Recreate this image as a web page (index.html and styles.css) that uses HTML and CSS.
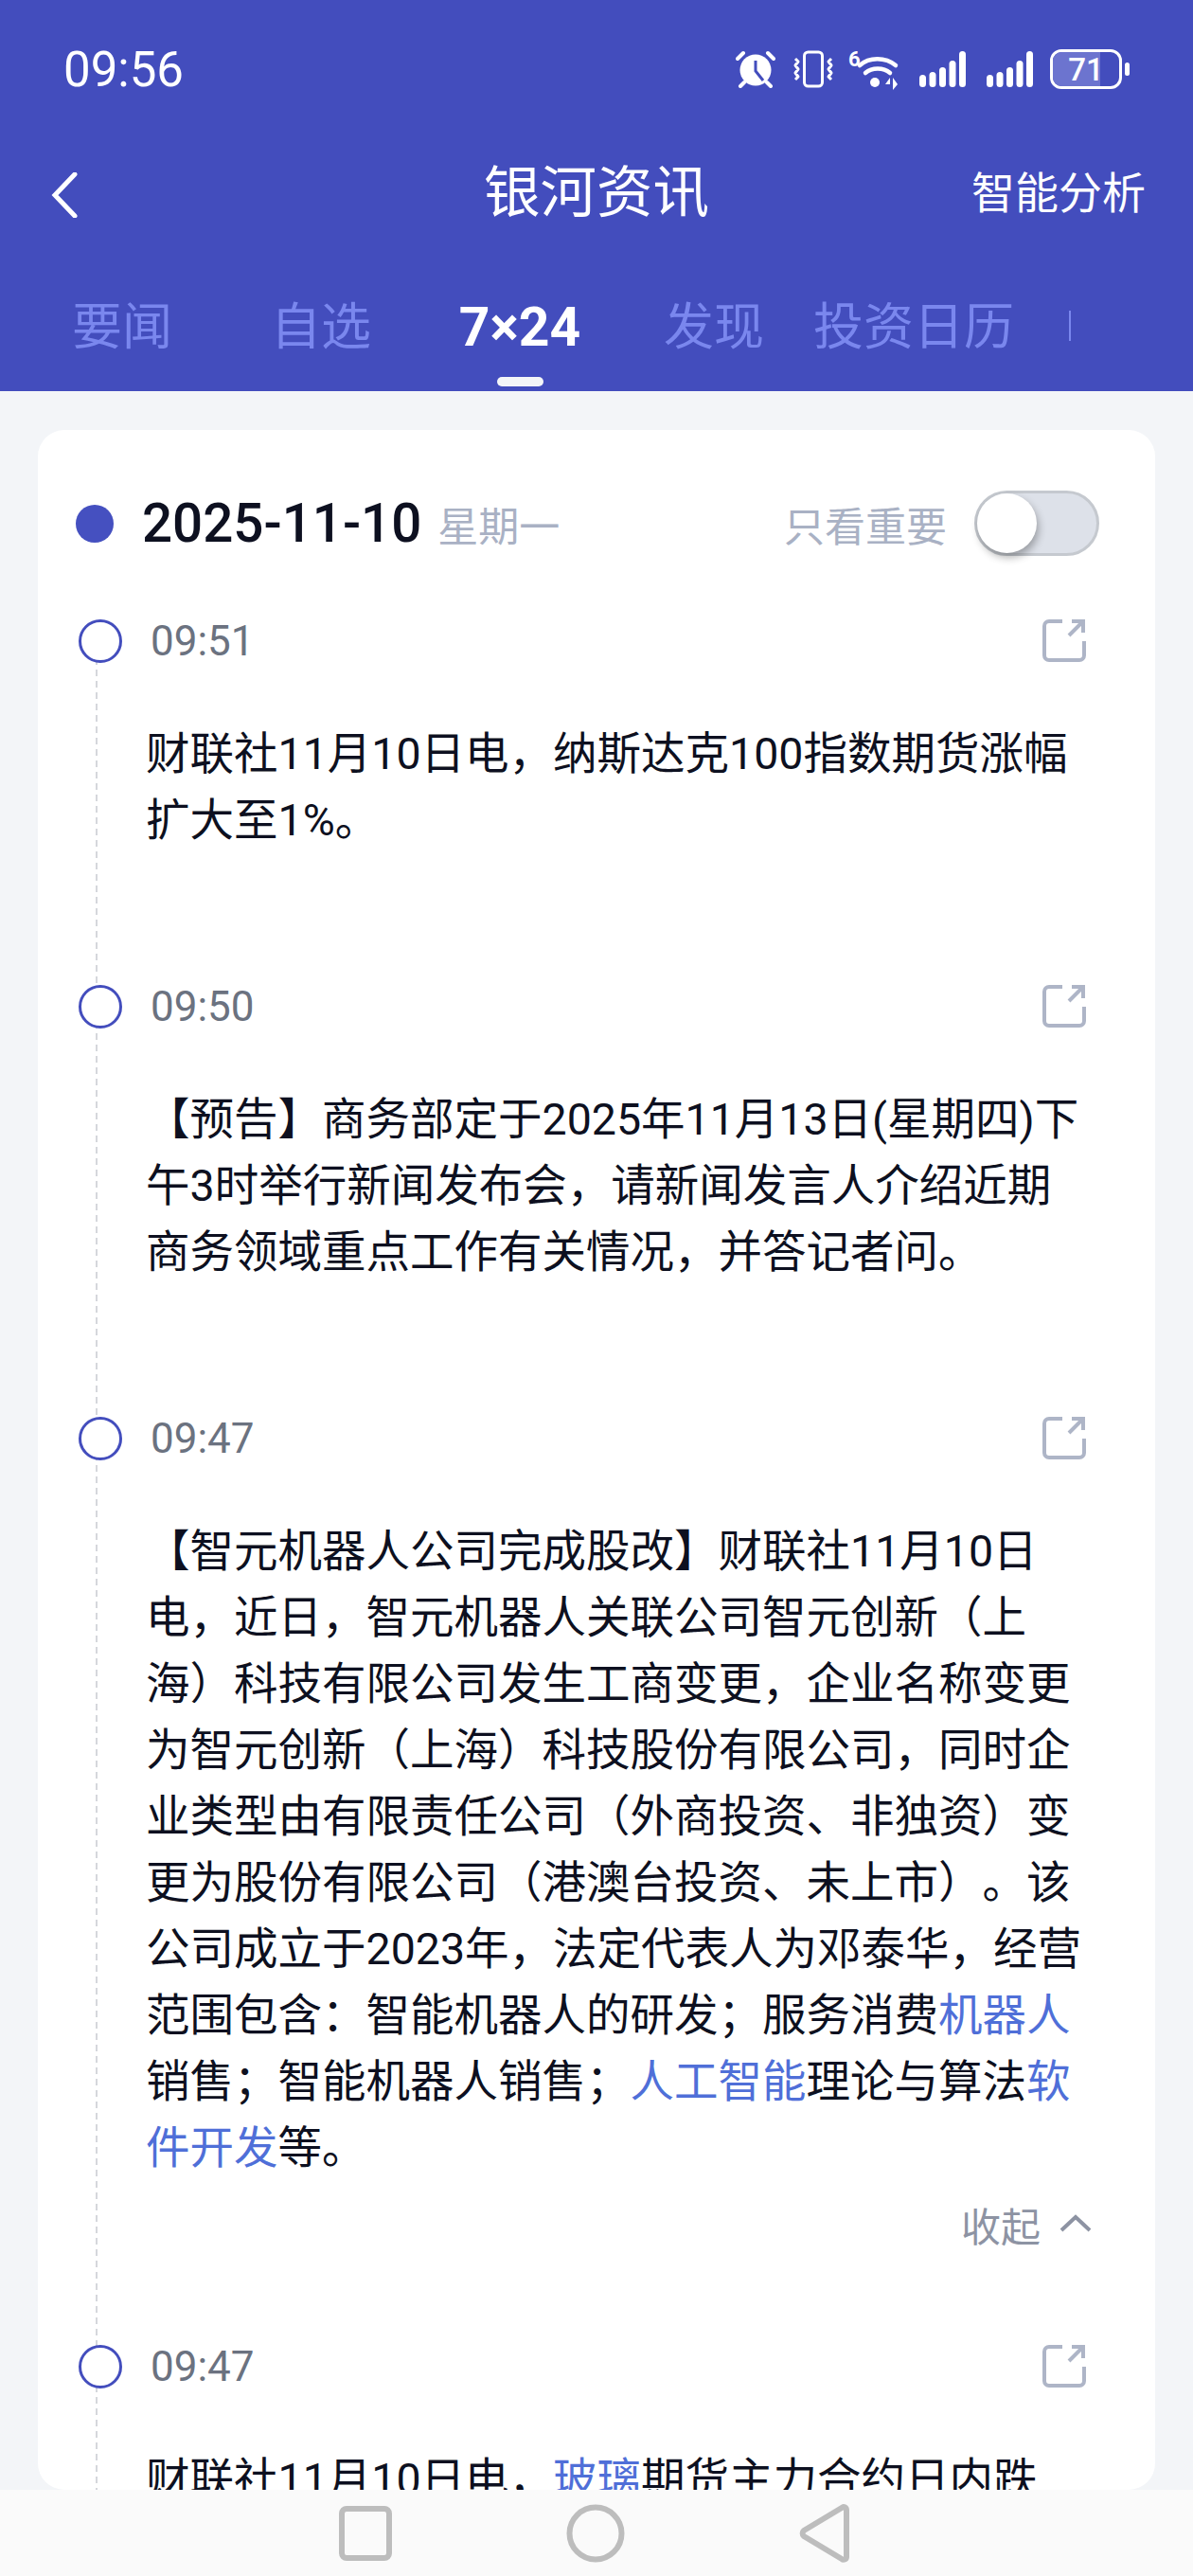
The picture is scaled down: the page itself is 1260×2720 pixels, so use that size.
FILE: index.html
```html
<!DOCTYPE html>
<html lang="zh-CN">
<head>
  <meta charset="UTF-8">
  <meta name="viewport" content="width=device-width, initial-scale=1.0">
  <title>银河资讯</title>
  <link rel="stylesheet" href="styles.css">
</head>
<body>
  <div class="page">
    <header class="header">
      <div class="status-bar">
        <span class="clock">09:56</span>
        <div class="status-icons">
          <svg class="icon-alarm" width="42" height="40" viewBox="0 0 42 40">
            <circle cx="21" cy="21" r="16.5" fill="#fff"/>
            <path d="M21 11v11l8 10" fill="none" stroke="#434dbd" stroke-width="3"/>
            <path d="M2 9l6-6M40 9l-6-6M5 38l4-4M37 38l-4-4" fill="none" stroke="#fff" stroke-width="4" stroke-linecap="round"/>
          </svg>
          <svg class="icon-vibrate" width="46" height="40" viewBox="0 0 46 40">
            <rect x="13.5" y="2" width="19" height="36" rx="4" fill="none" stroke="#fff" stroke-width="3"/>
            <path d="M4 9l3 3-3 4 3 4-3 4 3 4-3 3M42 9l-3 3 3 4-3 4 3 4-3 4 3 3" fill="none" stroke="#fff" stroke-width="3" stroke-linejoin="round"/>
          </svg>
          <svg class="icon-wifi" width="54" height="44" viewBox="0 0 54 44">
            <text x="0" y="19" class="wifi-six">6</text>
            <path d="M12 18c10-9 27-9 38 0M18 26c7-6 19-6 26 0" fill="none" stroke="#fff" stroke-width="4.5" stroke-linecap="round"/>
            <circle cx="28" cy="36" r="5" fill="#fff"/>
            <path d="M44 31l-5 7h5zM47 31v13l5-6z" fill="#fff"/>
          </svg>
          <svg class="icon-signal" width="50" height="40" viewBox="0 0 50 40">
            <rect x="0" y="26" width="7" height="13" rx="3.5" fill="#fff"/>
            <rect x="10.500" y="23" width="7" height="16" rx="3.5" fill="#fff"/>
            <rect x="21" y="18" width="7" height="21" rx="3.5" fill="#fff"/>
            <rect x="31.500" y="11" width="7" height="28" rx="3.5" fill="#fff"/>
            <rect x="42" y="1" width="7" height="38" rx="3.5" fill="#fff"/>
          </svg>
          <svg class="icon-signal" width="50" height="40" viewBox="0 0 50 40">
            <rect x="0" y="26" width="7" height="13" rx="3.5" fill="#fff"/>
            <rect x="10.500" y="23" width="7" height="16" rx="3.5" fill="#fff"/>
            <rect x="21" y="18" width="7" height="21" rx="3.5" fill="#fff"/>
            <rect x="31.500" y="11" width="7" height="28" rx="3.5" fill="#fff"/>
            <rect x="42" y="1" width="7" height="38" rx="3.5" fill="#fff"/>
          </svg>
          <div class="battery">
            <div class="battery-box">
              <div class="battery-fill"></div>
              <span class="battery-num">71</span>
            </div>
            <div class="battery-nub"></div>
          </div>
        </div>
      </div>

      <div class="nav-row">
        <svg class="back" width="28" height="48" viewBox="0 0 28 48">
          <path d="M25 2L4 24l21 22" fill="none" stroke="#fff" stroke-width="5" stroke-linecap="round"/>
        </svg>
        <h1 class="title">银河资讯</h1>
        <a class="nav-action">智能分析</a>
      </div>

      <div class="tabs">
        <span class="tab">要闻</span>
        <span class="tab">自选</span>
        <span class="tab tab-active">7×24</span>
        <span class="tab tab-shift">发现</span>
        <span class="tab tab-shift">投资日历</span>
        <span class="tab-edge"></span>
      </div>
    </header>

    <main class="content">
      <section class="card">
        <div class="date-row">
          <span class="date-dot"></span>
          <span class="date">2025-11-10</span>
          <span class="weekday">星期一</span>
          <span class="filter-label">只看重要</span>
          <span class="switch"><span class="switch-knob"></span></span>
        </div>

        <div class="timeline">
          <article class="news">
            <div class="news-head">
              <span class="news-time">09:51</span>
              <svg class="share" width="46" height="46" viewBox="0 0 46 46">
                <path d="M21 3H7a5 5 0 0 0-5 5v31a5 5 0 0 0 5 5h32a5 5 0 0 0 5-5V24" fill="none" stroke="#aeb5c7" stroke-width="4"/>
                <path d="M28 18L42 4M31 3h12v12" fill="none" stroke="#aeb5c7" stroke-width="4"/>
              </svg>
            </div>
            <p class="news-text">财联社11月10日电，纳斯达克100指数期货涨幅扩大至1%。</p>
          </article>

          <article class="news">
            <div class="news-head">
              <span class="news-time">09:50</span>
              <svg class="share" width="46" height="46" viewBox="0 0 46 46">
                <path d="M21 3H7a5 5 0 0 0-5 5v31a5 5 0 0 0 5 5h32a5 5 0 0 0 5-5V24" fill="none" stroke="#aeb5c7" stroke-width="4"/>
                <path d="M28 18L42 4M31 3h12v12" fill="none" stroke="#aeb5c7" stroke-width="4"/>
              </svg>
            </div>
            <p class="news-text">【预告】商务部定于2025年11月13日(星期四)下午3时举行新闻发布会，请新闻发言人介绍近期商务领域重点工作有关情况，并答记者问。</p>
          </article>

          <article class="news news-open">
            <div class="news-head">
              <span class="news-time">09:47</span>
              <svg class="share" width="46" height="46" viewBox="0 0 46 46">
                <path d="M21 3H7a5 5 0 0 0-5 5v31a5 5 0 0 0 5 5h32a5 5 0 0 0 5-5V24" fill="none" stroke="#aeb5c7" stroke-width="4"/>
                <path d="M28 18L42 4M31 3h12v12" fill="none" stroke="#aeb5c7" stroke-width="4"/>
              </svg>
            </div>
            <p class="news-text">【智元机器人公司完成股改】财联社11月10日电，近日，智元机器人关联公司智元创新（上海）科技有限公司发生工商变更，企业名称变更为智元创新（上海）科技股份有限公司，同时企业类型由有限责任公司（外商投资、非独资）变更为股份有限公司（港澳台投资、未上市）。该公司成立于2023年，法定代表人为邓泰华，经营范围包含：智能机器人的研发；服务消费<a class="stock">机器人</a>销售；智能机器人销售；<a class="stock">人工智能</a>理论与算法<a class="stock">软件开发</a>等。</p>
            <div class="fold">
              <span>收起</span>
              <svg width="36" height="20" viewBox="0 0 36 20">
                <path d="M3 17L18 3l15 14" fill="none" stroke="#8d93a3" stroke-width="4"/>
              </svg>
            </div>
          </article>

          <article class="news">
            <div class="news-head">
              <span class="news-time">09:47</span>
              <svg class="share" width="46" height="46" viewBox="0 0 46 46">
                <path d="M21 3H7a5 5 0 0 0-5 5v31a5 5 0 0 0 5 5h32a5 5 0 0 0 5-5V24" fill="none" stroke="#aeb5c7" stroke-width="4"/>
                <path d="M28 18L42 4M31 3h12v12" fill="none" stroke="#aeb5c7" stroke-width="4"/>
              </svg>
            </div>
            <p class="news-text">财联社11月10日电，<a class="stock">玻璃</a>期货主力合约日内跌</p>
          </article>
        </div>
      </section>
    </main>

    <footer class="system-nav">
      <svg width="56" height="58" viewBox="0 0 56 58">
        <rect x="3" y="3" width="50" height="52" rx="5" fill="none" stroke="#bdbdbd" stroke-width="6"/>
      </svg>
      <svg width="62" height="62" viewBox="0 0 62 62">
        <circle cx="31" cy="31" r="27.500" fill="none" stroke="#bdbdbd" stroke-width="6"/>
      </svg>
      <svg width="54" height="64" viewBox="0 0 54 64">
        <path d="M47 4a3 3 0 0 1 3 3v50a3 3 0 0 1-5 2L5 35a4 4 0 0 1 0-6L45 5z" fill="none" stroke="#bdbdbd" stroke-width="6" stroke-linejoin="round"/>
      </svg>
    </footer>
  </div>
</body>
</html>
```

FILE: styles.css
```css
* {
  box-sizing: border-box;
}

body {
  margin: 0;
  font-family: Roboto, 'Noto Sans CJK SC', sans-serif;
  background: #F3F5F8;
  color: #0D1020;
}

.page {
  width: 1260px;
  height: 2720px;
  display: flex;
  flex-direction: column;
  overflow: hidden;
}

/* header */
.header {
  height: 413px;
  background: #434DBD;
  color: #FFFFFF;
  flex-shrink: 0;
}

.status-bar {
  height: 146px;
  padding: 0 67px 0 67px;
  display: flex;
  justify-content: space-between;
  align-items: center;
}

.clock {
  font-size: 51px;
}

.status-icons {
  display: flex;
  align-items: center;
}

.icon-alarm {
  margin-right: 17px;
}

.icon-vibrate {
  margin-right: 14px;
}

.icon-wifi {
  margin-right: 21px;
}

.icon-signal {
  margin-right: 21px;
}

.icon-signal + .battery {
  margin-left: -4px;
}

.wifi-six {
  font-size: 22px;
  font-weight: 700;
  fill: #FFFFFF;
}

.battery {
  display: flex;
  align-items: center;
  gap: 3px;
}

.battery-box {
  position: relative;
  width: 76px;
  height: 42px;
  border: 3px solid #FFFFFF;
  border-radius: 12px;
  overflow: hidden;
  display: flex;
  align-items: center;
  justify-content: center;
}

.battery-fill {
  position: absolute;
  left: 0;
  top: 0;
  bottom: 0;
  width: 71%;
  background: #6C74CF;
}

.battery-num {
  position: relative;
  font-size: 33px;
  font-weight: 500;
}

.battery-nub {
  width: 5px;
  height: 14px;
  border-radius: 3px;
  background: #FFFFFF;
}

.nav-row {
  height: 116px;
  padding: 0 50px;
  display: grid;
  grid-template-columns: 1fr auto 1fr;
  align-items: center;
}

.back {
  margin: 4px 0 0 4px;
}

.title {
  margin: 0;
  font-size: 59.5px;
  font-weight: 400;
  line-height: 80px;
}

.nav-action {
  justify-self: end;
  font-size: 46px;
  line-height: 60px;
}

.tabs {
  display: flex;
  padding: 49px 0 0 24px;
  overflow: hidden;
}

.tab {
  flex: 0 0 210px;
  text-align: center;
  white-space: nowrap;
  font-size: 53px;
  line-height: 70px;
  color: #7A87EE;
}

.tab-shift {
  position: relative;
  left: -5px;
}

.tab-active {
  font-size: 57px;
  font-weight: 700;
  color: #FFFFFF;
}

.tab-active::after {
  content: '';
  display: block;
  width: 49px;
  height: 10px;
  margin: 17px auto 0;
  border-radius: 5px;
  background: #F3F5F8;
}

.tab-edge {
  width: 2px;
  height: 32px;
  margin: 17px 0 0 53px;
  background: #7A87EE;
}

/* content */
.content {
  flex: 1;
  min-height: 0;
  padding: 41px 40px 0;
  display: flex;
}

.card {
  flex: 1;
  background: #FFFFFF;
  border-radius: 28px;
  overflow: hidden;
  padding-top: 64px;
}

.date-row {
  height: 69px;
  padding-left: 40px;
  padding-right: 59px;
  display: flex;
  align-items: center;
}

.date-dot {
  width: 40px;
  height: 40px;
  border-radius: 50%;
  background: #4550C0;
}

.date {
  margin-left: 30px;
  font-size: 56.5px;
  font-weight: 500;
}

.weekday {
  margin-left: 17px;
  font-size: 43px;
  color: #A9B1C4;
}

.filter-label {
  margin-left: auto;
  font-size: 43px;
  color: #A9B1C4;
}

.switch {
  width: 132px;
  height: 69px;
  margin-left: 29px;
  padding: 3px;
  border: 3px solid #C5C9CF;
  border-radius: 35px;
  background: #DDE1E9;
}

.switch-knob {
  display: block;
  width: 63px;
  height: 63px;
  margin: -3px 0 0 -3px;
  border-radius: 50%;
  background: #FFFFFF;
  box-shadow: 2px 5px 8px rgba(0, 0, 0, 0.3);
}

.timeline {
  margin-top: 58px;
  padding: 0 73px 0 42px;
  background: repeating-linear-gradient(to bottom, #D5D7DC 0 7px, transparent 7px 12px) 61px 50px / 2px 100% no-repeat;
}

.news {
  padding-bottom: 130px;
}

.news-open {
  padding-bottom: 89px;
}

.news-head {
  position: relative;
  height: 60px;
  padding-left: 77px;
  display: flex;
  justify-content: space-between;
  align-items: center;
}

.news-head::before {
  content: '';
  position: absolute;
  left: 1px;
  top: 9px;
  width: 40px;
  height: 40px;
  border: 3px solid #434DBD;
  border-radius: 50%;
  background: #FFFFFF;
}

.news-time {
  margin-top: 3px;
  font-size: 44px;
  color: #6B7280;
}

.share {
  margin-top: 2px;
}

.news-text {
  margin: 56px 0 0 72px;
  width: 990px;
  font-size: 46.5px;
  line-height: 70px;
  text-spacing-trim: space-all;
}

.stock {
  color: #4F6FD8;
}

.fold {
  height: 60px;
  margin-top: 15px;
  margin-right: -7px;
  display: flex;
  justify-content: flex-end;
  align-items: center;
  gap: 19px;
  font-size: 42px;
  color: #8D93A3;
}

.system-nav {
  height: 91px;
  flex-shrink: 0;
  background: #FAFAFA;
  display: flex;
  align-items: center;
  padding-left: 358px;
  gap: 184px;
}
```
